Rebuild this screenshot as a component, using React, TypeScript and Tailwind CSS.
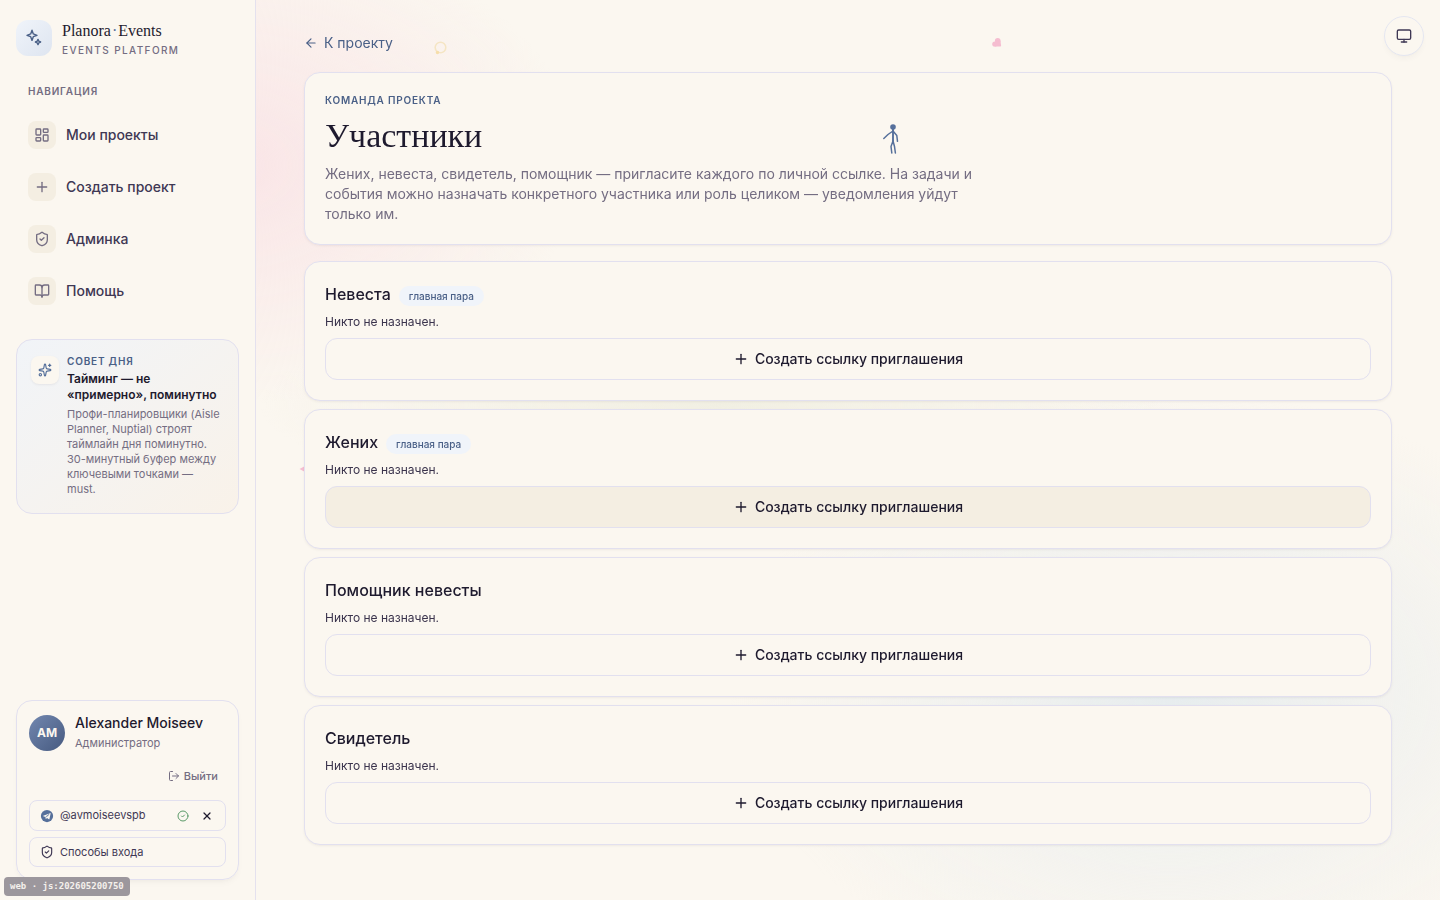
import type { ReactNode } from 'react';
import {
  ArrowLeft,
  BookOpen,
  CircleCheck,
  LayoutDashboard,
  LogOut,
  Monitor,
  Plus,
  ShieldCheck,
  Sparkles,
  X,
} from 'lucide-react';

interface NavItem {
  label: string;
  icon: ReactNode;
}

interface Role {
  id: string;
  title: string;
  isMain?: boolean;
  highlighted?: boolean;
}

const NAV: NavItem[] = [
  { label: 'Мои проекты', icon: <LayoutDashboard size={16} strokeWidth={2} /> },
  { label: 'Создать проект', icon: <Plus size={16} strokeWidth={2} /> },
  { label: 'Админка', icon: <ShieldCheck size={16} strokeWidth={2} /> },
  { label: 'Помощь', icon: <BookOpen size={16} strokeWidth={2} /> },
];

const ROLES: Role[] = [
  { id: 'bride', title: 'Невеста', isMain: true },
  { id: 'groom', title: 'Жених', isMain: true, highlighted: true },
  { id: 'bride-helper', title: 'Помощник невесты' },
  { id: 'witness', title: 'Свидетель' },
];

function LogoMark() {
  return (
    <svg width="18" height="18" viewBox="0 0 18 18" fill="none" stroke="currentColor" strokeWidth="1.4" strokeLinejoin="round">
      <path d="M7 1.2 8.3 4.9 12 6.3 8.3 7.7 7 11.4 5.7 7.7 2 6.3 5.7 4.9Z" />
      <path d="M13 10.4 13.8 12.2 15.6 13 13.8 13.8 13 15.6 12.2 13.8 10.4 13 12.2 12.2Z" />
    </svg>
  );
}

function TelegramIcon() {
  return (
    <svg width="14" height="14" viewBox="0 0 24 24" className="text-[#56709b]">
      <circle cx="12" cy="12" r="10.5" fill="currentColor" />
      <path d="M5.6 11.7 17.3 7.1c.6-.2 1 .1.9.8l-2 9.3c-.1.6-.6.8-1.1.5l-3-2.2-1.5 1.4c-.3.3-.7.2-.8-.2l-.6-3.1-3.5-1.1c-.6-.2-.6-.6-.1-.8Z" fill="#fbf7f0" />
      <path d="m9.6 13.5 5.8-4.3-4.7 5" fill="none" stroke="currentColor" strokeWidth="1" />
    </svg>
  );
}

function Walker() {
  return (
    <svg width="20" height="34" viewBox="0 0 20 34" fill="none" stroke="#56709b" strokeWidth="1.5" strokeLinecap="round" strokeLinejoin="round">
      <circle cx="11" cy="5" r="2.8" fill="#56709b" stroke="none" />
      <path d="M11 7v12" strokeWidth="1.9" />
      <path d="M11 9 6 12.5 1.8 16.5M11 9l3.8 4.5.7 5.8" />
      <path d="M11 19 9 24.5 9.8 31M11 19l1.5 5.5.9 6.5" />
    </svg>
  );
}

function Sidebar() {
  return (
    <aside className="sticky top-0 flex h-screen w-64 shrink-0 flex-col border-r border-[#e4e1ee] bg-[#fbf7f0] px-4 py-5">
      <a href="#home" className="flex h-9 items-center gap-[10px]">
        <span className="flex size-9 shrink-0 items-center justify-center rounded-xl bg-linear-to-br from-[#f0f4fa] to-[#dee5f0] text-[#4a6087]">
          <LogoMark />
        </span>
        <span className="flex flex-col">
          <span className="flex gap-px font-['Liberation_Serif',serif] text-base leading-6 text-[#1e1a2e]">
            Planora<span className="text-[#56709b]">·</span>Events
          </span>
          <span className="text-[10px] leading-[14px] font-medium tracking-[0.14em] text-[#746d82] uppercase">Events Platform</span>
        </span>
      </a>

      <p className="mt-7 px-3 text-[10px] leading-[14px] font-semibold tracking-[0.08em] text-[#746d82] uppercase">Навигация</p>
      <nav className="mt-[15px] flex flex-col gap-2">
        {NAV.map(item => (
          <a key={item.label} href="#nav" className="flex h-11 items-center gap-[10px] rounded-xl px-3 text-sm font-medium text-[#3f3854]">
            <span className="flex size-7 items-center justify-center rounded-lg bg-[#f4eee2] text-[#746d82]">{item.icon}</span>
            {item.label}
          </a>
        ))}
      </nav>

      <section className="mt-[26px] flex gap-2 rounded-2xl border border-[#e2e0ef] bg-linear-to-br from-[#f1f4f8] to-[#f9f2e9] px-[14px] pt-[14px] pb-4">
        <span className="mt-[2px] flex size-7 shrink-0 items-center justify-center rounded-lg bg-[#fbf7f0] text-[#56709b] shadow-sm shadow-[#1e1a2e]/5">
          <Sparkles size={14} />
        </span>
        <div>
          <p className="text-[10px] leading-[15px] font-semibold tracking-[0.08em] text-[#4a6087] uppercase">Совет дня</p>
          <h2 className="mt-[2px] text-xs leading-4 font-semibold text-[#1e1a2e]">Тайминг — не «примерно», поминутно</h2>
          <p className="mt-1 text-[11px] leading-[15px] text-[#746d82]">
            Профи-планировщики (Aisle Planner, Nuptial) строят таймлайн дня поминутно. 30-минутный буфер между ключевыми точками — must.
          </p>
        </div>
      </section>

      <section className="mt-auto flex flex-col rounded-2xl border border-[#e2e0ef] p-3 shadow-md shadow-[#1e1a2e]/3">
        <div className="flex items-center gap-[10px]">
          <span className="flex size-9 shrink-0 items-center justify-center rounded-full bg-linear-to-br from-[#7388b0] to-[#465a80] text-xs font-bold text-[#fbf7f0]">
            AM
          </span>
          <div>
            <p className="text-sm leading-5 font-medium text-[#1e1a2e]">Alexander Moiseev</p>
            <p className="text-[11px] leading-5 text-[#746d82]">Администратор</p>
          </div>
        </div>
        <button type="button" className="mt-[11px] flex h-6 items-center gap-1 self-end px-2 text-[11px] font-medium text-[#746d82]">
          <LogOut size={12} strokeWidth={2} />
          Выйти
        </button>
        <div className="mt-3 flex h-[31px] items-center rounded-lg border border-[#e2e0ef] px-[10px] text-[11px] text-[#3f3854]">
          <TelegramIcon />
          <span className="ml-[6px] flex-1">@avmoiseevspb</span>
          <CircleCheck size={12} className="text-[#5a9a68]" />
          <button type="button" aria-label="Отвязать" className="mr-[2px] ml-3 flex size-3 items-center justify-center text-[#1e1a2e]">
            <X size={12} strokeWidth={2.5} />
          </button>
        </div>
        <button type="button" className="mt-[6px] flex h-[30px] items-center gap-[6px] rounded-lg border border-[#e2e0ef] px-[10px] text-[11px] text-[#3f3854]">
          <ShieldCheck size={14} />
          Способы входа
        </button>
      </section>
    </aside>
  );
}

function RoleCard({ role }: { role: Role }) {
  return (
    <section className="flex flex-col gap-2 rounded-2xl border border-[#e2e0ef] bg-[#fbf7f0] p-5 shadow-sm shadow-[#1e1a2e]/5">
      <div className="flex h-6 items-center gap-2">
        <h2 className="text-base font-medium text-[#1e1a2e]">{role.title}</h2>
        {role.isMain && (
          <span className="mt-1 rounded-full bg-[#f0f4fa] px-[10px] text-[10px] leading-5 font-medium text-[#4a6087]">главная пара</span>
        )}
      </div>
      <p className="text-xs text-[#3a334c]">Никто не назначен.</p>
      <button
        type="button"
        className={`flex h-[42px] items-center justify-center gap-[6px] rounded-xl border border-[#e2e0ef] text-sm font-medium text-[#1e1a2e] ${
          role.highlighted ? 'bg-[#f4eee2]' : 'bg-[#fbf7f0]'
        }`}
      >
        <Plus size={16} strokeWidth={2} />
        Создать ссылку приглашения
      </button>
    </section>
  );
}

// Soft colour spots and small confetti behind the cards
function Backdrop() {
  return (
    <div aria-hidden="true" className="pointer-events-none fixed inset-0">
      <div className="absolute inset-0 bg-[radial-gradient(360px_240px_at_220px_165px,#f9e4e6_0%,#f9e4e680_50%,#f9e4e600_100%),radial-gradient(460px_100px_at_720px_405px,#f1efe2_0%,#f1efe200_100%),radial-gradient(440px_300px_at_1170px_690px,#e6ecee_0%,#e6ecee73_45%,#e6ecee00_100%)]" />
      <svg width="16" height="16" viewBox="0 0 16 16" fill="none" className="absolute top-10 left-[432px]">
        <circle cx="8.5" cy="7.5" r="5.3" stroke="#f5e5c4" strokeWidth="1.6" />
        <circle cx="5.5" cy="12.5" r="1.7" fill="#f6deaa" />
      </svg>
      <svg width="12" height="12" viewBox="0 0 12 12" fill="#f5bdd0" className="absolute top-[37px] left-[991px]">
        <circle cx="6.7" cy="3.7" r="2.8" />
        <circle cx="3.8" cy="7" r="2.6" />
        <path d="M3.5 9.6h5.3c1 0 1.4-.5 1.3-1.4L9.4 3.5 5 5Z" />
      </svg>
      <svg width="8" height="8" viewBox="0 0 8 8" fill="#f5bdd0" className="absolute top-[465px] left-[299px]">
        <path d="M0.5 4 7 .5v7Z" />
      </svg>
    </div>
  );
}

export default function App() {
  return (
    <div className="flex min-h-screen bg-[#fbf7f0] font-[Inter,sans-serif] text-[#1e1a2e]">
      <Backdrop />
      <Sidebar />

      <main className="relative min-w-0 flex-1 px-12 pt-8 pb-12">
        <a href="#project" className="mb-[18px] flex w-fit items-center gap-[6px] text-sm leading-[22px] text-[#4a6087]">
          <ArrowLeft size={14} />
          К проекту
        </a>

        <header className="rounded-2xl border border-[#e2e0ef] bg-[#fbf7f0] p-5 shadow-sm shadow-[#1e1a2e]/5">
          <p className="text-[10px] leading-[15px] font-semibold tracking-[0.08em] text-[#4a6087] uppercase">Команда проекта</p>
          <h1 className="mt-2 font-['Liberation_Serif',serif] text-[34px] leading-10 text-[#1e1a2e]">Участники</h1>
          <p className="mt-2 max-w-2xl text-sm leading-5 text-[#746d82]">
            Жених, невеста, свидетель, помощник — пригласите каждого по личной ссылке. На задачи и события можно назначать
            конкретного участника или роль целиком — уведомления уйдут только им.
          </p>
        </header>

        <div className="mt-4 flex flex-col gap-2">
          {ROLES.map(role => (
            <RoleCard key={role.id} role={role} />
          ))}
        </div>
      </main>

      <div aria-hidden="true" className="pointer-events-none fixed top-[122px] left-[882px]">
        <Walker />
      </div>
      <button
        type="button"
        aria-label="Тема оформления"
        className="fixed top-4 right-4 flex size-10 items-center justify-center rounded-full border border-[#e4e6f0] bg-[#fbf7f0] text-[#3f3854] shadow-md shadow-[#1e1a2e]/3"
      >
        <Monitor size={16} />
      </button>
      <span className="fixed bottom-1 left-1 rounded bg-[#9c979d] px-[6px] font-['DejaVu_Sans_Mono',monospace] text-[9px] leading-[19px] font-bold text-[#f4f0ec]">
        web · js:202605200750
      </span>
    </div>
  );
}
